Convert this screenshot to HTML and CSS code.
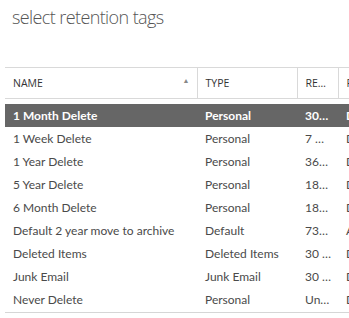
FILE: index.html
```html
<!DOCTYPE html>
<html lang="en">
<head>
  <meta charset="UTF-8" />
  <title>select retention tags</title>
  <link rel="stylesheet" href="styles.css">
</head>
<body>
  <h1 class="title">select retention tags</h1>

  <div class="grid-wrap">
    <table class="grid">
      <colgroup>
        <col class="col-name">
        <col class="col-type">
        <col class="col-period">
        <col class="col-action">
      </colgroup>
      <thead>
        <tr>
          <th class="sorted">NAME <span class="sort-arrow">&#9650;</span></th>
          <th>TYPE</th>
          <th>RE…</th>
          <th>RETENTION ACTION</th>
        </tr>
      </thead>
      <tbody>
        <tr class="spacer"><td colspan="4"></td></tr>
        <tr class="selected"><td>1 Month Delete</td><td>Personal</td><td>30…</td><td>Delete and Allow Recovery</td></tr>
        <tr><td>1 Week Delete</td><td>Personal</td><td>7 …</td><td>Delete and Allow Recovery</td></tr>
        <tr><td>1 Year Delete</td><td>Personal</td><td>36…</td><td>Delete and Allow Recovery</td></tr>
        <tr><td>5 Year Delete</td><td>Personal</td><td>18…</td><td>Delete and Allow Recovery</td></tr>
        <tr><td>6 Month Delete</td><td>Personal</td><td>18…</td><td>Delete and Allow Recovery</td></tr>
        <tr><td>Default 2 year move to archive</td><td>Default</td><td>73…</td><td>Archive</td></tr>
        <tr><td>Deleted Items</td><td>Deleted Items</td><td>30 …</td><td>Delete and Allow Recovery</td></tr>
        <tr><td>Junk Email</td><td>Junk Email</td><td>30 …</td><td>Delete and Allow Recovery</td></tr>
        <tr><td>Never Delete</td><td>Personal</td><td>Un…</td><td>Delete and Allow Recovery</td></tr>
      </tbody>
    </table>
  </div>
</body>
</html>
```

FILE: styles.css
```css
body {
  margin: 0;
  background: #fff;
  font-family: 'Open Sans', sans-serif;
  color: #444;
  overflow: hidden;
}

.title {
  margin: 0;
  padding: 4px 0 0 12px;
  font-size: 18px;
  font-weight: 300;
  letter-spacing: -0.6px;
  color: #555;
  line-height: 26px;
}

.grid-wrap {
  margin: 37px 0 0 5px;
  width: 344px;
  overflow: hidden;
  border-bottom: 1px solid #d6d6d6;
  padding-bottom: 1px;
}

.grid {
  table-layout: fixed;
  width: 500px;
  border-collapse: collapse;
}

.col-name { width: 192px; }
.col-type { width: 100px; }
.col-period { width: 41px; }
.col-action { width: 167px; }

.grid th {
  height: 30px;
  padding: 0 8px;
  text-align: left;
  font-size: 10.5px;
  font-weight: 400;
  color: #333;
  border-top: 1px solid #d9d9d9;
  border-bottom: 1px solid #d9d9d9;
  border-left: 1px solid #d9d9d9;
  white-space: nowrap;
  overflow: hidden;
}

.grid th:first-child {
  border-left: none;
}

.sort-arrow {
  float: right;
  font-size: 7px;
  color: #888;
  margin-right: -1px;
}

.grid td {
  height: 23px;
  padding: 0 8px;
  font-family: 'Lato', sans-serif;
  font-size: 12px;
  color: #4a4a4a;
  white-space: nowrap;
  overflow: hidden;
}

.grid .spacer td {
  height: 5px;
}

.grid .selected td {
  background: #666;
  color: #fff;
  font-weight: 700;
}
```
